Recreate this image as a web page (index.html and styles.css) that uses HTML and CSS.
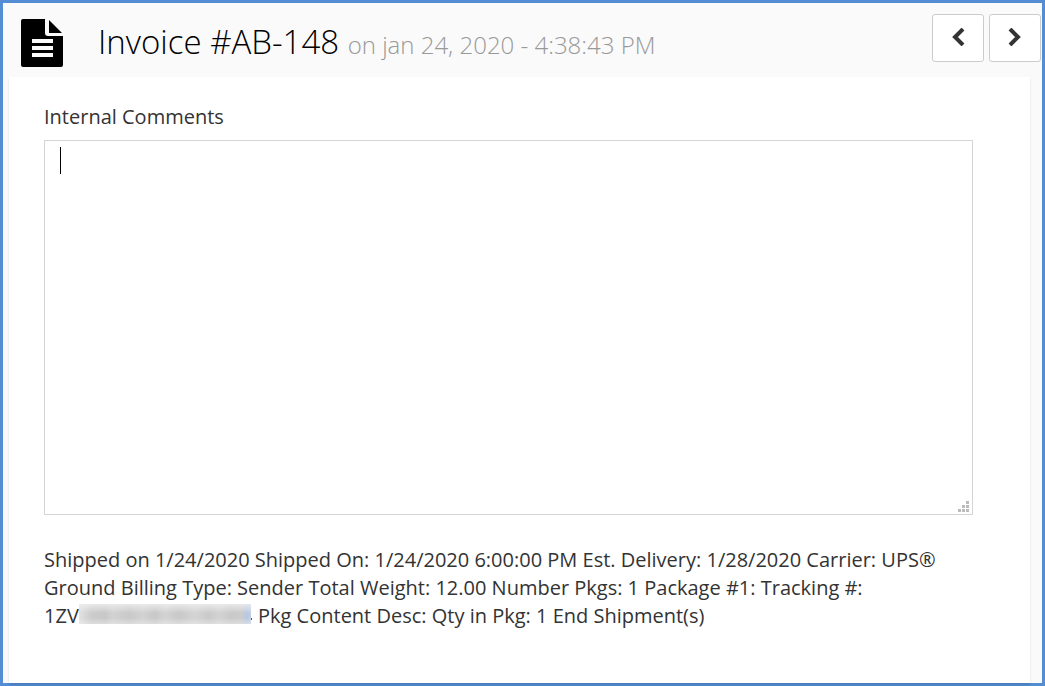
FILE: index.html
```html
<!DOCTYPE html>
<html lang="en">
<head>
<meta charset="utf-8">
<title>Invoice #AB-148</title>
<link rel="stylesheet" href="styles.css">
</head>
<body>
<div class="page">
  <header class="header">
    <svg class="doc-icon" viewBox="0 0 42 48" aria-hidden="true">
      <path d="M2 0H24V14Q24 17 27 17H42V46Q42 48 40 48H2Q0 48 0 46V2Q0 0 2 0Z" fill="#000"/>
      <path d="M28 1L41 14H28Z" fill="#000"/>
      <path d="M11 20H32V24H11ZM11 27H32V31H11ZM11 34H32V38H11Z" fill="#fafafa"/>
    </svg>
    <h1 class="title">Invoice #AB-148 <small class="date">on jan 24, 2020 - 4:38:43 PM</small></h1>
    <nav class="pager" aria-label="Invoices">
      <button class="pager-button" type="button" aria-label="Previous invoice">
        <svg class="chevron" viewBox="0 0 14 18" aria-hidden="true"><path d="M12 1L4 9L12 17"/></svg>
      </button>
      <button class="pager-button" type="button" aria-label="Next invoice">
        <svg class="chevron" viewBox="0 0 14 18" aria-hidden="true"><path d="M2 1L10 9L2 17"/></svg>
      </button>
    </nav>
  </header>
  <main class="panel">
    <label class="label" for="comments">Internal Comments</label>
    <div class="field">
      <textarea class="comments" id="comments"></textarea>
      <span class="caret"></span>
      <svg class="grip" viewBox="0 0 11 11" aria-hidden="true"><path d="M8 0h3v3h-3zM4 4h3v3h-3zM8 4h3v3h-3zM0 8h3v3h-3zM4 8h3v3h-3zM8 8h3v3h-3z"/></svg>
    </div>
    <p class="shipment">Shipped on 1/24/2020 Shipped On: 1/24/2020 6:00:00 PM Est. Delivery: 1/28/2020 Carrier: UPS® Ground Billing Type: Sender Total Weight: 12.00 Number Pkgs: 1 Package #1: Tracking #: <span class="tracking">1ZV<span class="redacted"></span></span> Pkg Content Desc: Qty in Pkg: 1 End Shipment(s)</p>
  </main>
</div>
</body>
</html>
```
FILE: styles.css
```css
* {
  box-sizing: border-box;
}

body {
  margin: 0;
  font-family: "Open Sans", "Noto Sans", sans-serif;
  font-size: 20px;
  line-height: 28px;
  color: #333;
}

.page {
  display: flex;
  flex-direction: column;
  min-height: 100vh;
  border: 3px solid #548dd4;
  background: #fafafa;
}

.header {
  display: flex;
  align-items: flex-start;
  padding: 11px 1px 10px 18px;
}

.doc-icon {
  flex: none;
  width: 42px;
  height: 48px;
  margin-top: 5px;
}

.title {
  flex: 1;
  margin: 6px 0 0 35px;
  font-size: 33px;
  font-weight: 300;
  line-height: 44px;
  color: #000;
}

.date {
  font-size: 24px;
  color: #999;
}

.pager {
  display: flex;
  gap: 5px;
}

.pager-button {
  display: flex;
  align-items: center;
  justify-content: center;
  width: 52px;
  height: 48px;
  padding: 0 0 2px;
  border: 1px solid #ccc;
  border-radius: 3px;
  background: #fff;
}

.chevron {
  width: 14px;
  height: 18px;
  fill: none;
  stroke: #333;
  stroke-width: 4;
}

.panel {
  flex: 1;
  margin: 0 12px 0 6px;
  padding: 26px 57px 24px 35px;
  background: #fff;
  box-shadow: 0 2px 2px rgba(0, 0, 0, 0.12);
}

.label {
  display: block;
  margin-bottom: 9px;
}

.field {
  position: relative;
}

.comments {
  display: block;
  width: 100%;
  height: 375px;
  padding: 6px 15px;
  border: 1px solid #d5d5d5;
  border-radius: 0;
  outline: none;
  resize: none;
  background: #fff;
  color: #333;
  font: inherit;
}

.caret {
  position: absolute;
  top: 7px;
  left: 16px;
  width: 1px;
  height: 27px;
  background: #000;
}

.grip {
  position: absolute;
  right: 4px;
  bottom: 3px;
  width: 11px;
  height: 11px;
  fill: #bbb;
}

.shipment {
  margin: 31px 0 0;
}

.tracking {
  white-space: nowrap;
}

.redacted {
  display: inline-block;
  width: 174px;
  height: 20px;
  vertical-align: -1px;
  background:
    linear-gradient(#555, #555) 172px 14px / 1px 2px no-repeat,
    linear-gradient(rgba(240, 240, 240, 0.8), transparent 45%, transparent 70%, rgba(240, 240, 240, 0.5)) 0 0 / 172px 20px no-repeat,
    linear-gradient(90deg, #e2e2e2, #ccc 12px, #c8c8c8 26px, #d2d2d2 34px, #c9c9c9 50px, #d2d2d2 64px, #c8c8c8 76px, #d3d3d3 86px, #c9c9c9 100px, #d4d4d4 116px, #cacaca 130px, #d3d3d3 140px, #c9c9c9 152px, #ccc 162px, #b8c8e2 168px, #c0cfe6) 0 0 / 172px 20px no-repeat;
}
```
